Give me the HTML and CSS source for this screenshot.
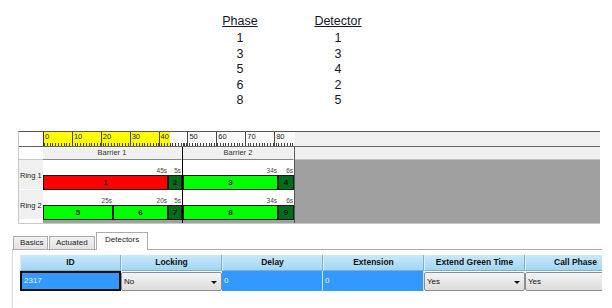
FILE: index.html
```html
<!DOCTYPE html>
<html lang="en">
<head>
    <meta charset="UTF-8">
    <title>Signal Plan - Detectors</title>
    <link rel="stylesheet" href="styles.css">
</head>
<body>
    <div class="phase-map">
        <div class="col">
            <div class="head">Phase</div>
            <div>1</div><div>3</div><div>5</div><div>6</div><div>8</div>
        </div>
        <div class="col">
            <div class="head">Detector</div>
            <div>1</div><div>3</div><div>4</div><div>2</div><div>5</div>
        </div>
    </div>

    <div class="diagram">
        <div class="ruler-row">
            <div class="corner"></div>
            <div class="ruler">
                <span>0</span><span>10</span><span>20</span><span>30</span><span>40</span>
                <span>50</span><span>60</span><span>70</span><span>80</span>
            </div>
            <div class="ruler-rest"></div>
        </div>
        <div class="plan">
            <div class="labels">
                <div class="blank"></div>
                <div class="ring-name">Ring 1</div>
                <div class="ring-name">Ring 2</div>
            </div>
            <div class="barrier b1">
                <div class="barrier-head">Barrier 1</div>
                <div class="ring">
                    <div class="phase" style="width: 125px"><div class="t">45s</div><div class="bar red">1</div></div>
                    <div class="phase" style="width: 14px"><div class="t">5s</div><div class="bar dark">2</div></div>
                </div>
                <div class="ring">
                    <div class="phase" style="width: 70px"><div class="t">25s</div><div class="bar green">5</div></div>
                    <div class="phase" style="width: 55px"><div class="t">20s</div><div class="bar green">6</div></div>
                    <div class="phase" style="width: 14px"><div class="t">5s</div><div class="bar dark">7</div></div>
                </div>
            </div>
            <div class="barrier b2">
                <div class="barrier-head">Barrier 2</div>
                <div class="ring">
                    <div class="phase" style="width: 95px"><div class="t">34s</div><div class="bar green">3</div></div>
                    <div class="phase" style="width: 16px"><div class="t">6s</div><div class="bar dark">4</div></div>
                </div>
                <div class="ring">
                    <div class="phase" style="width: 95px"><div class="t">34s</div><div class="bar green">8</div></div>
                    <div class="phase" style="width: 16px"><div class="t">6s</div><div class="bar dark">9</div></div>
                </div>
            </div>
            <div class="plan-rest">
                <div class="rest-head"></div>
                <div class="rest-body"></div>
            </div>
        </div>
    </div>

    <div class="tabs">
        <div class="tab">Basics</div>
        <div class="tab">Actuated</div>
        <div class="tab active">Detectors</div>
    </div>
    <div class="panel">
        <div class="grid-wrap">
            <div class="grid">
                <div class="th">ID</div>
                <div class="th">Locking</div>
                <div class="th">Delay</div>
                <div class="th">Extension</div>
                <div class="th">Extend Green Time</div>
                <div class="th">Call Phase</div>

                <div class="td sel focus">2317</div>
                <div class="td combo">No<span class="arrow"></span></div>
                <div class="td sel">0</div>
                <div class="td sel">0</div>
                <div class="td combo">Yes<span class="arrow"></span></div>
                <div class="td combo">Yes<span class="arrow"></span></div>
            </div>
        </div>
    </div>
</body>
</html>
```

FILE: styles.css
```css
body {
    margin: 0;
    background: #fff;
    font-family: "Liberation Sans", Arial, sans-serif;
    color: #111;
}

/* phase / detector list */
.phase-map {
    display: flex;
    gap: 18px;
    margin-left: 200px;
    padding-top: 14px;
    font-size: 12.5px;
    color: #16162a;
}

.col {
    width: 80px;
    text-align: center;
    line-height: 15.4px;
}

.col .head {
    text-decoration: underline;
    margin-bottom: 2px;
}

/* timing diagram */
.diagram {
    margin: 23px 12px 0 18px;
    border-top: 1px solid #555;
    border-left: 1px solid #c8c8c8;
    border-bottom: 1px solid #c8c8c8;
    font-size: 7px;
}

.ruler-row {
    display: flex;
    height: 14px;
    border-bottom: 1px solid #666;
}

.corner {
    width: 24px;
    background: #fff;
}

.ruler {
    display: flex;
    width: 251px;
    border-left: 1px solid #333;
    background:
        repeating-linear-gradient(90deg, #444 0 1px, transparent 1px 2.79px) 0 100% / 100% 3px no-repeat,
        linear-gradient(90deg, #ffff00 0 126px, #fafafa 126px);
}

.ruler span {
    width: 26.9px;
    flex: none;
    border-left: 1px solid #444;
    padding-left: 1px;
    line-height: 9px;
    font-size: 7.5px;
    color: #222;
}

.ruler span:first-child {
    border-left: none;
}

.ruler-rest {
    flex: 1;
    background: #f0f0f0;
}

.plan {
    display: flex;
}

.labels {
    width: 24px;
    background: #fff;
}

.labels .blank {
    height: 12px;
    border-bottom: 1px solid #c8c8c8;
}

.ring-name {
    height: 29px;
    margin-bottom: 1px;
    background: #f0f0f0;
    padding-top: 11px;
    box-sizing: border-box;
    padding-left: 1px;
    font-size: 7.5px;
    color: #222;
}

.barrier {
    background: #fff;
    padding-bottom: 3px;
    background-clip: content-box;
    box-shadow: inset 0 -3px 0 #a0a0a0;
}

.b1 {
    width: 139px;
    border-right: 1px solid #000;
}

.b2 {
    width: 111px;
    border-right: 1px solid #555;
}

.barrier-head {
    height: 12px;
    line-height: 12px;
    text-align: center;
    background: #f0f0f0;
    border-bottom: 1px solid #888;
    border-right: 1px solid #fff;
    font-size: 7.5px;
    color: #333;
}

.ring {
    display: flex;
    height: 30px;
}

.phase {
    display: flex;
    flex-direction: column;
    flex: none;
}

.phase .t {
    height: 15px;
    line-height: 21px;
    text-align: right;
    padding-right: 1px;
    color: #444;
    font-size: 6.5px;
}

.bar {
    height: 15px;
    box-sizing: border-box;
    border: 1px solid #1a1a1a;
    text-align: center;
    line-height: 13px;
    font-size: 8px;
    font-weight: bold;
    color: #111;
}

.red { background: #ff0000; }
.green { background: #00ff00; }
.dark { background: #006d1c; }

.plan-rest {
    flex: 1;
    display: flex;
    flex-direction: column;
}

.rest-head {
    height: 12px;
    background: #f0f0f0;
    border-bottom: 1px solid #c0c0c0;
}

.rest-body {
    flex: 1;
    background: #a0a0a0;
}

/* tabs */
.tabs {
    display: flex;
    align-items: flex-end;
    margin: 8px 0 0 13px;
    height: 17px;
    font-size: 8px;
}

.tab {
    height: 13px;
    line-height: 12px;
    padding: 0 6px;
    margin-right: 1px;
    border: 1px solid #acacac;
    border-bottom: none;
    background: linear-gradient(#f2f2f2, #e2e2e2);
    color: #222;
    box-sizing: border-box;
}

.tab:nth-child(1) { width: 35px; }
.tab:nth-child(2) { width: 46px; }

.tab.active {
    width: 52px;
    height: 18px;
    line-height: 13px;
    background: #fff;
    margin-bottom: -1px;
    padding-left: 8px;
    position: relative;
}

.panel {
    margin: 0 10px 0 12px;
    border-top: 1px solid #acacac;
    border-left: 1px solid #d6d6d6;
    padding: 5px 0 0 7px;
    height: 60px;
}

.grid-wrap {
    overflow: hidden;
}

.grid {
    display: grid;
    grid-template-columns: repeat(6, 101px);
    grid-template-rows: 16px 20px;
    width: 606px;
    font-size: 8px;
}

.th {
    background: linear-gradient(#c8e9fb, #a2d6f4);
    border-right: 1px solid #7fb0cf;
    border-bottom: 1px solid #7fb0cf;
    border-left: 1px solid #d8f0fc;
    font-weight: bold;
    font-size: 8.5px;
    text-align: center;
    line-height: 15px;
    color: #111;
}

.td {
    position: relative;
    line-height: 19px;
    padding-left: 2px;
    box-sizing: border-box;
}

.sel {
    background: #3399ff;
    color: #e8f2ff;
    border-right: 1px solid #c9dff5;
}

.sel.focus {
    border: 2px solid #111;
    line-height: 16px;
}

.combo {
    background: linear-gradient(#f4f4f4, #dcdcdc);
    border: 1px solid #8e8e8e;
    border-radius: 2px;
    line-height: 18px;
    color: #111;
    margin-top: 1px;
}

.arrow {
    position: absolute;
    right: 4px;
    top: 8px;
    border-left: 3px solid transparent;
    border-right: 3px solid transparent;
    border-top: 3px solid #111;
}
```
